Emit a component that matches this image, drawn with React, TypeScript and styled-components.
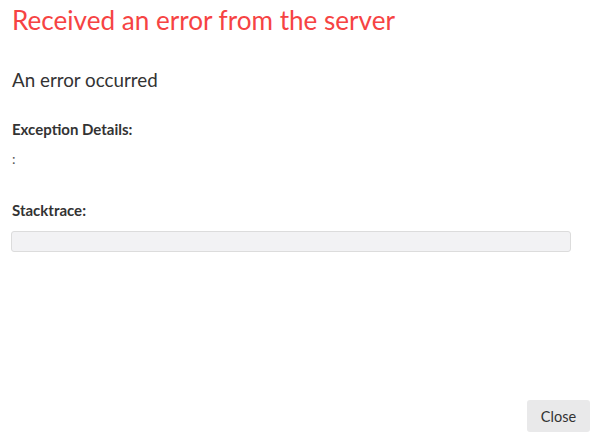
import React from "react";
import styled, { createGlobalStyle } from "styled-components";

const Global = createGlobalStyle`
  html, body { margin: 0; padding: 0; background: #fff; }
  body { font-family: Lato, "Open Sans", sans-serif; color: #333; }
`;

const Dialog = styled.div`
  width: 597px;
  height: 437px;
  box-sizing: border-box;
  padding: 0 7px 5px 11px;
  display: flex;
  flex-direction: column;
`;

const Title = styled.h1`
  margin: 4px 0 0 1px;
  font-size: 26.1px;
  font-weight: 400;
  line-height: 32px;
  color: #f64343;
`;

const Message = styled.p`
  margin: 33px 0 0 1px;
  font-size: 18.8px;
  line-height: 22px;
  color: #333;
`;

const Label = styled.h3<{ $top: number }>`
  margin: ${(p) => p.$top}px 0 0 1px;
  font-size: 15px;
  font-weight: 700;
  line-height: 18px;
  color: #333;
`;

const Detail = styled.div`
  margin: 12px 0 0 1px;
  font-size: 14px;
  line-height: 18px;
  color: #555;
`;

const Trace = styled.pre`
  margin: 12px 19px 0 0;
  height: 19px;
  background: #f2f2f4;
  border: 1px solid #dcdcdc;
  border-radius: 3px;
`;

const Footer = styled.div`
  margin-top: auto;
  display: flex;
  justify-content: flex-end;
`;

const Button = styled.button`
  font-family: Lato, "Open Sans", sans-serif;
  font-size: 14.5px;
  color: #333;
  background: #e9e9ea;
  border: none;
  border-radius: 3px;
  width: 63px;
  height: 32px;
  padding: 0;
`;

export default function App() {
  return (
    <>
      <Global />
      <Dialog>
        <Title>Received an error from the server</Title>
        <Message>An error occurred</Message>
        <Label $top={29}>Exception Details:</Label>
        <Detail>:</Detail>
        <Label $top={33}>Stacktrace:</Label>
        <Trace />
        <Footer>
          <Button>Close</Button>
        </Footer>
      </Dialog>
    </>
  );
}
